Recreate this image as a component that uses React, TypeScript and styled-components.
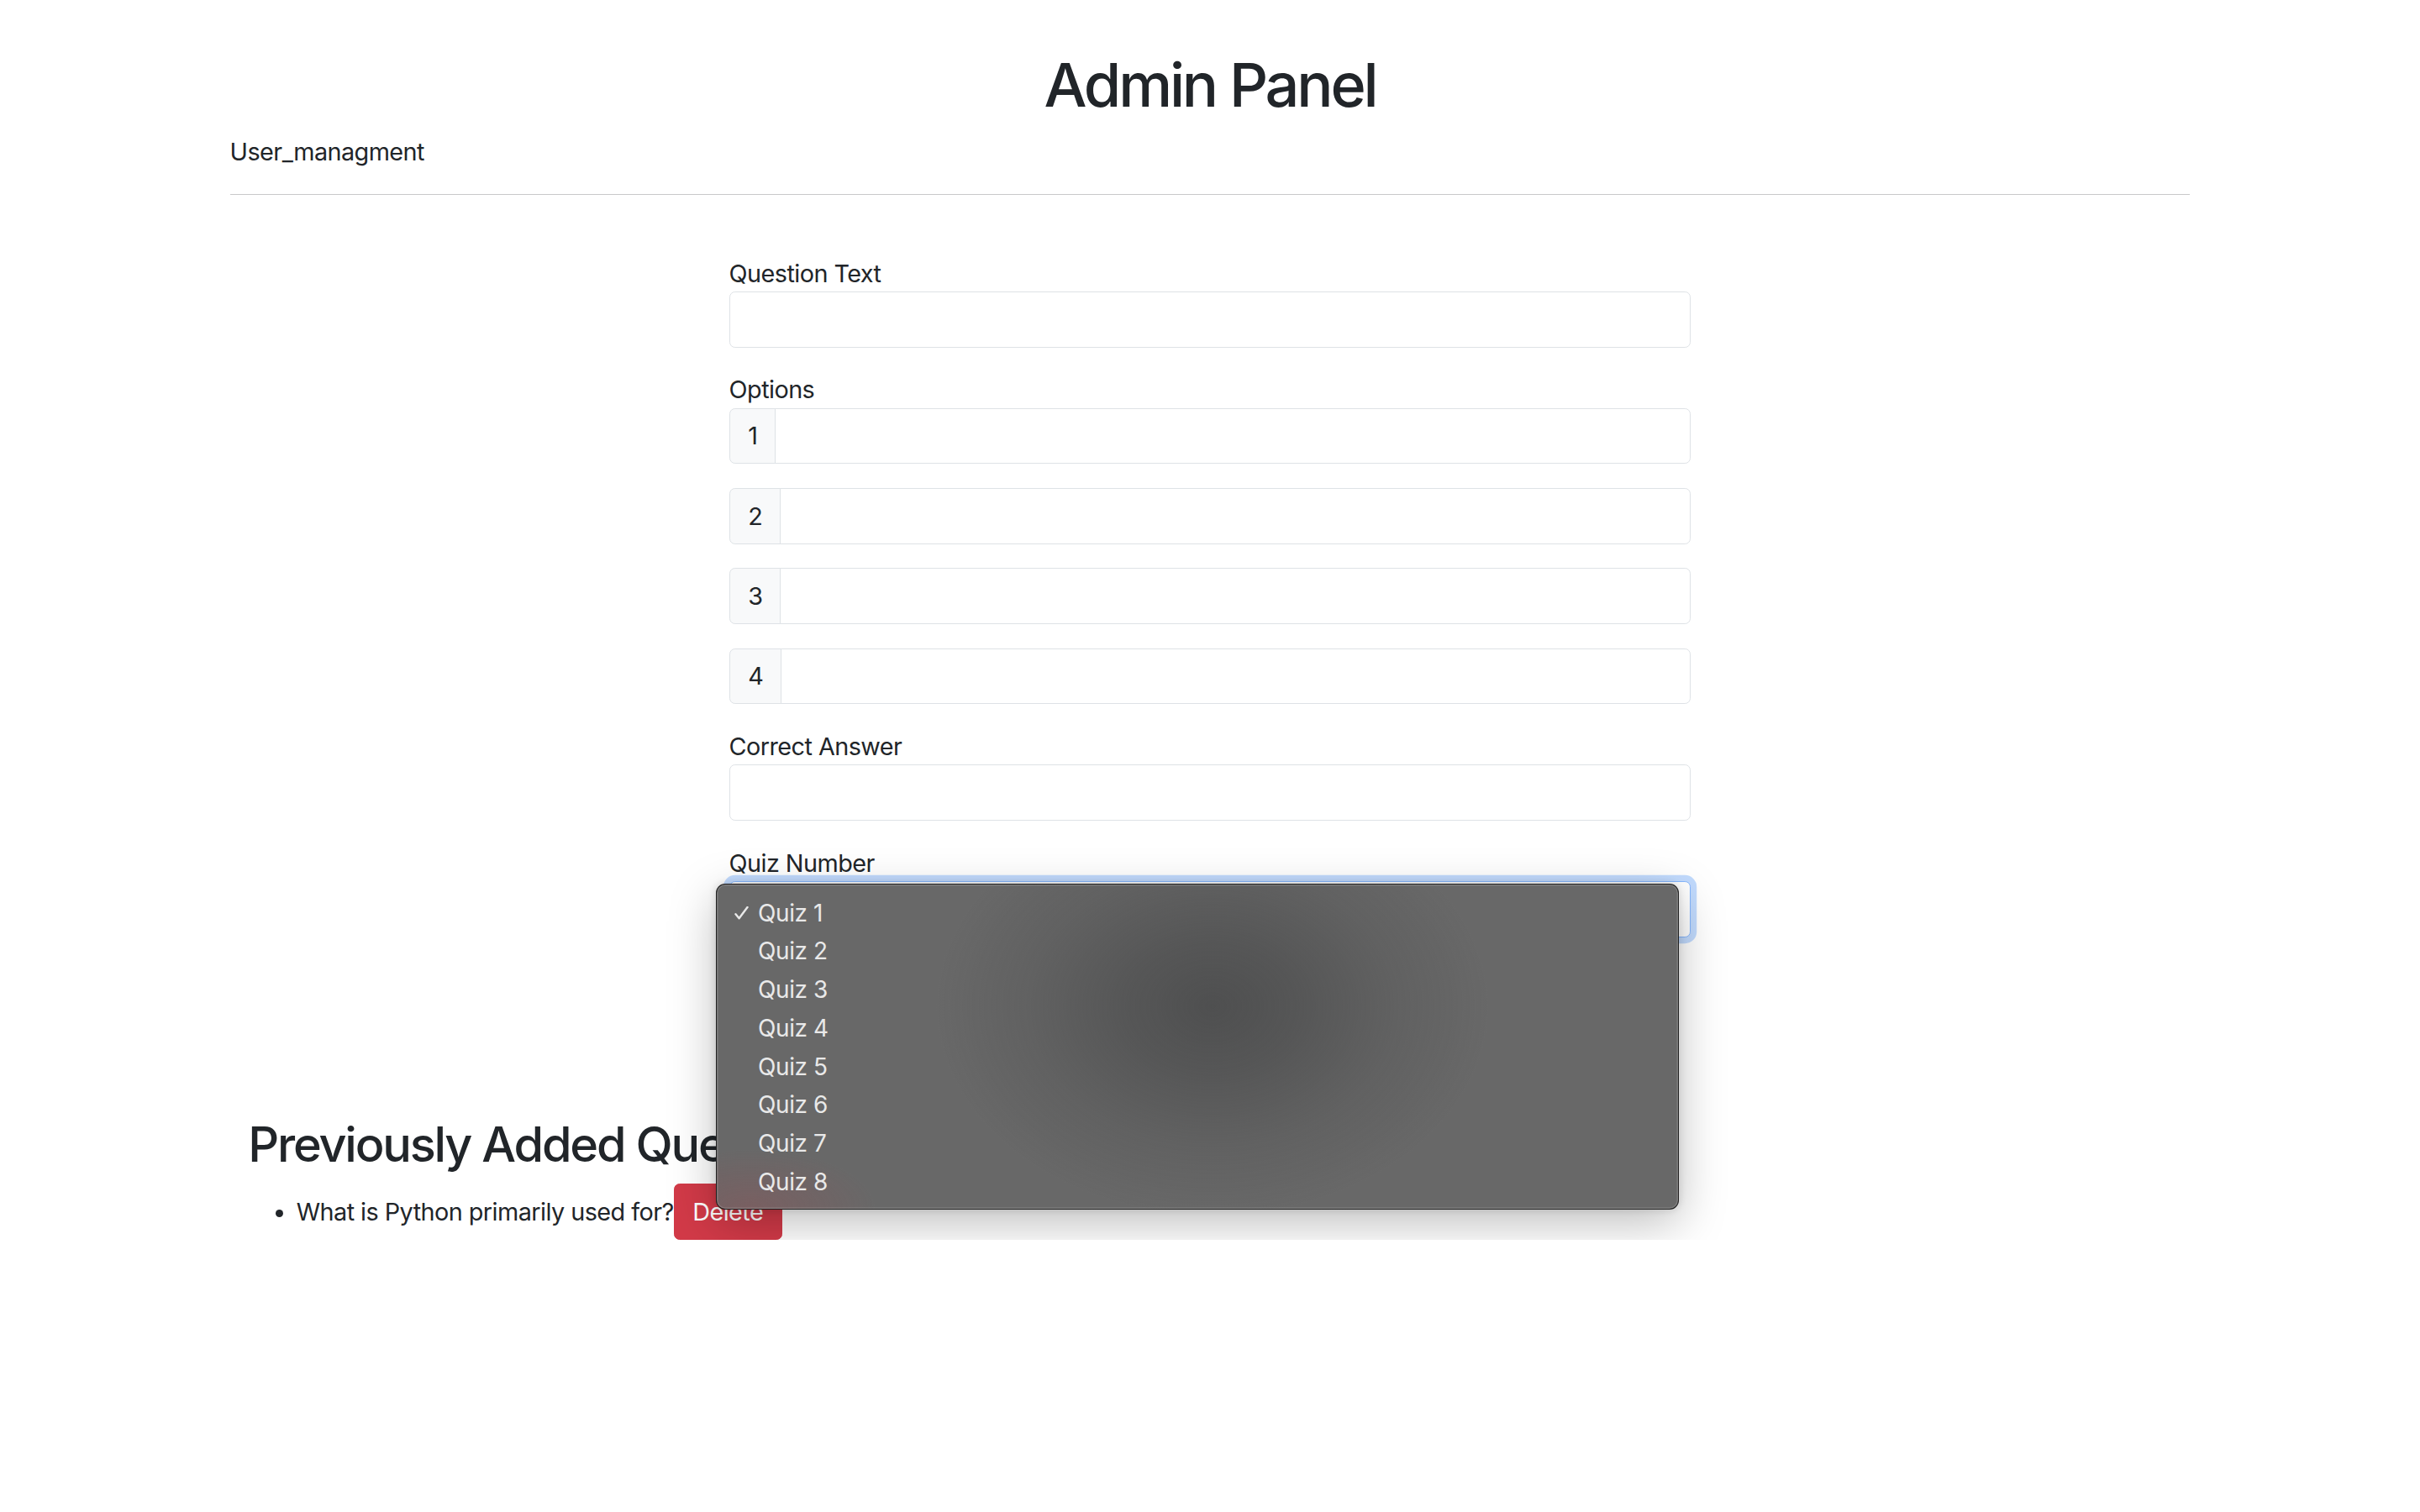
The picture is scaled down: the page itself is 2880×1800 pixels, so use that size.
import React from "react";
import styled, { createGlobalStyle } from "styled-components";

const GlobalStyle = createGlobalStyle`
  html, body {
    margin: 0;
    padding: 0;
    background: #ffffff;
  }
  body {
    font-family: Inter, "Noto Sans", "Liberation Sans", sans-serif;
    font-size: 28.8px;
    line-height: 1.5;
    letter-spacing: -0.55px;
    color: #212529;
  }
  *, *::before, *::after { box-sizing: border-box; }
`;

const Page = styled.div`
  max-width: 2376px;
  margin: 0 auto;
  padding: 0 21.6px;
`;

const Title = styled.h1`
  margin: 58px 0 14.4px;
  font-size: 72px;
  font-weight: 500;
  line-height: 1.2;
  letter-spacing: -3.2px;
  text-align: center;
`;

const NavLink = styled.div`
  font-size: 28.8px;
  line-height: 43.2px;
`;

const Divider = styled.hr`
  margin: 28.8px 0;
  border: 0;
  border-top: 1.8px solid #c8c9ca;
  height: 0;
`;

const Form = styled.form`
  width: 1144.8px;
  margin: 72px auto 0;
  display: flex;
  flex-direction: column;
`;

const Field = styled.div`
  margin-bottom: 28.8px;
  display: flex;
  flex-direction: column;
`;

const Label = styled.label`
  display: block;
  line-height: 43.2px;
`;

const TextInput = styled.div`
  height: 66.6px;
  border: 1.8px solid #dee2e6;
  border-radius: 6.75px;
  background: #fff;
`;

const OptionList = styled.div`
  display: flex;
  flex-direction: column;
  gap: 28.8px;
`;

const InputGroup = styled.div`
  display: flex;
  height: 66.6px;
`;

const GroupAddon = styled.span`
  display: flex;
  align-items: center;
  padding: 0 21.6px;
  background: #f8f9fa;
  border: 1.8px solid #dee2e6;
  border-radius: 6.75px 0 0 6.75px;
  font-size: 28.8px;
  color: #212529;
`;

const GroupInput = styled.div`
  flex: 1;
  margin-left: -1.8px;
  border: 1.8px solid #dee2e6;
  border-radius: 0 6.75px 6.75px 0;
  background: #fff;
`;

const SelectWrap = styled.div`
  position: relative;
`;

const SelectBox = styled.div`
  height: 66.6px;
  border: 1.8px solid #86b7fe;
  border-radius: 6.75px;
  background: #fff;
  box-shadow: 0 0 0 7.2px rgba(13, 110, 253, 0.25);
`;

const PopupMenu = styled.div`
  position: absolute;
  z-index: 10;
  left: -15.6px;
  top: 2.8px;
  width: 1146px;
  height: 388px;
  padding: 11px 0 9px;
  border-radius: 11px;
  border: 1.5px solid rgba(20, 20, 20, 0.85);
  box-shadow: inset 0 0 0 1.5px rgba(255, 255, 255, 0.14),
    0 16px 56px rgba(0, 0, 0, 0.26), 0 0 10px rgba(0, 0, 0, 0.14);
  background:
    radial-gradient(ellipse 330px 250px at 590px 145px,
      rgba(58, 59, 60, 0.55) 0%,
      rgba(58, 59, 60, 0.4) 30%,
      rgba(58, 59, 60, 0.16) 65%,
      rgba(58, 59, 60, 0) 100%),
    radial-gradient(ellipse 150px 70px at 40px 385px,
      rgba(190, 60, 70, 0.2) 0%,
      rgba(190, 60, 70, 0) 100%),
    #686868;
  display: flex;
  flex-direction: column;
`;

const MenuItem = styled.div`
  height: 46px;
  display: flex;
  align-items: center;
  padding-left: 21px;
  font-size: 28px;
  letter-spacing: -0.4px;
  color: #e9e9e9;
`;

const CheckSlot = styled.span`
  width: 28px;
  display: inline-flex;
  align-items: center;
`;

const SubmitButton = styled.button`
  align-self: center;
  margin-top: -14.4px;
  height: 68.4px;
  padding: 0 21.6px;
  font-family: inherit;
  font-size: 28.8px;
  color: #fff;
  background: #212529;
  border: 1.8px solid #212529;
  border-radius: 6.75px;
`;

const Section = styled.section`
  margin-top: 130px;
  padding: 0 21.6px;
`;

const SectionTitle = styled.h2`
  margin: 0 0 12px;
  font-size: 57.6px;
  font-weight: 500;
  line-height: 1.2;
  letter-spacing: -2.2px;
`;

const QuestionList = styled.ul`
  margin: 0;
  padding-left: 57.6px;
`;

const QuestionItem = styled.li`
  line-height: 43.2px;
`;

const DeleteButton = styled.button`
  display: inline-block;
  vertical-align: baseline;
  padding: 10.8px 21.6px;
  font-family: inherit;
  font-size: 28.8px;
  letter-spacing: -0.55px;
  line-height: 43.2px;
  color: #fff;
  background: #d23a48;
  border: 1.8px solid #d23a48;
  border-radius: 6.75px;
`;

const Check = () => (
  <svg width="17" height="16" viewBox="0 0 17 16">
    <path
      d="M1.5 9.2 L5.6 14.2 L15.5 1"
      fill="none"
      stroke="#e9e9e9"
      strokeWidth="2.4"
      strokeLinecap="round"
      strokeLinejoin="round"
    />
  </svg>
);

const quizzes = [1, 2, 3, 4, 5, 6, 7, 8];

export default function App() {
  return (
    <>
      <GlobalStyle />
      <Page>
        <Title>Admin Panel</Title>
        <NavLink>User_managment</NavLink>
        <Divider />
        <Form onSubmit={(e) => e.preventDefault()}>
          <Field>
            <Label>Question Text</Label>
            <TextInput />
          </Field>
          <Field>
            <Label>Options</Label>
            <OptionList>
              {[1, 2, 3, 4].map((n) => (
                <InputGroup key={n}>
                  <GroupAddon>{n}</GroupAddon>
                  <GroupInput />
                </InputGroup>
              ))}
            </OptionList>
          </Field>
          <Field>
            <Label>Correct Answer</Label>
            <TextInput />
          </Field>
          <Field>
            <Label>Quiz Number</Label>
            <SelectWrap>
              <SelectBox />
              <PopupMenu>
                {quizzes.map((q) => (
                  <MenuItem key={q}>
                    <CheckSlot>{q === 1 ? <Check /> : null}</CheckSlot>
                    Quiz {q}
                  </MenuItem>
                ))}
              </PopupMenu>
            </SelectWrap>
          </Field>
          <SubmitButton type="submit">Add Question</SubmitButton>
        </Form>
        <Section>
          <SectionTitle>Previously Added Questions</SectionTitle>
          <QuestionList>
            <QuestionItem>
              What is Python primarily used for?
              <DeleteButton>Delete</DeleteButton>
            </QuestionItem>
          </QuestionList>
        </Section>
      </Page>
    </>
  );
}
